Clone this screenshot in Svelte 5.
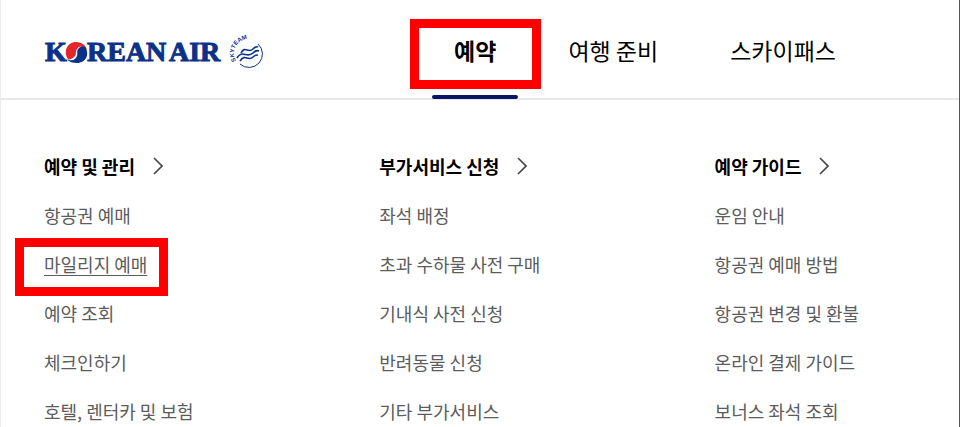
<script lang="ts">
  const menus = [
    { label: '예약', active: true },
    { label: '여행 준비', active: false },
    { label: '스카이패스', active: false }
  ];

  const groups = [
    {
      title: '예약 및 관리',
      items: ['항공권 예매', '마일리지 예매', '예약 조회', '체크인하기', '호텔, 렌터카 및 보험']
    },
    {
      title: '부가서비스 신청',
      items: ['좌석 배정', '초과 수하물 사전 구매', '기내식 사전 신청', '반려동물 신청', '기타 부가서비스']
    },
    {
      title: '예약 가이드',
      items: ['운임 안내', '항공권 예매 방법', '항공권 변경 및 환불', '온라인 결제 가이드', '보너스 좌석 조회']
    }
  ];

  const marked = '마일리지 예매';
</script>

<div class="page">
  <header class="header">
    <a class="logo" href="#home" aria-label="KOREAN AIR">
      <svg width="220" height="40" viewBox="0 0 220 40">
        <g class="wordmark">
          <text x="0" y="29">K</text>
          <text x="42" y="29">REAN</text>
          <text x="124" y="29">AIR</text>
        </g>
        <circle cx="31.5" cy="20.5" r="11.5" fill="#fff" />
        <path d="M23 27C18 20 22 10 31 10C37 10 42 14 42 19C40 14 34 13 32 17C30 20 32 22 29 25C27 27 24 28 23 27Z" fill="#e4262b" />
        <path d="M40 15C45 22 41 31 32 31C28 31 24 30 22 27C27 30 31 27 32 24C33 21 31 19 34 16C36 14 39 14 40 15Z" fill="#0b3289" />
        <g fill="none" stroke="#0b3289">
          <path d="M213 12A13 13 0 1 1 195 32" stroke-width="1" />
          <path d="M196 21C200 13 203 22 208 17C210 15 211 14 213 15" stroke-width="1.6" />
          <path d="M192 26C197 17 202 27 208 21C210 19 212 18 214 19" stroke-width="1.6" />
          <path d="M195 29C200 21 203 30 208 25C210 23 211 23 213 23" stroke-width="1.6" />
        </g>
        <path id="skyteam-arc" d="M191 29A14 14 0 0 1 216 14" fill="none" />
        <text class="skyteam"><textPath href="#skyteam-arc">SKYTEAM</textPath></text>
      </svg>
    </a>

    <nav class="nav">
      {#each menus as menu (menu.label)}
        <a class="nav-item" class:active={menu.active} href="#menu">{menu.label}</a>
      {/each}
    </nav>
  </header>

  <main class="groups">
    {#each groups as group (group.title)}
      <section class="group">
        <h2 class="group-title">
          <a href="#group">
            {group.title}
            <svg width="10" height="18" viewBox="0 0 10 18" fill="none" stroke="currentColor" stroke-width="1.6">
              <path d="M1 1L9 9L1 17" />
            </svg>
          </a>
        </h2>
        <ul>
          {#each group.items as item (item)}
            <li><a class:marked={item === marked} href="#item">{item}</a></li>
          {/each}
        </ul>
      </section>
    {/each}
  </main>
</div>

<style>
  :global(body) {
    margin: 0;
    background: #fff;
    overflow: hidden;
  }

  .page {
    min-height: 100vh;
    box-sizing: border-box;
    border-left: 1px solid #ececec;
    border-right: 1px solid #2f5f88;
    font-family: 'Noto Sans CJK KR', sans-serif;
    color: #000;
  }

  a {
    color: inherit;
    text-decoration: none;
  }

  .header {
    display: flex;
    align-items: stretch;
    height: 98px;
    border-bottom: 2px solid #e8e7ee;
  }

  .logo {
    display: flex;
    align-items: center;
    padding: 6px 0 0 44px;
  }

  .logo svg {
    overflow: visible;
  }

  .wordmark {
    font: bold 28px 'Liberation Serif', serif;
    fill: #0b3289;
    stroke: #0b3289;
  }

  .skyteam {
    font: bold 6px 'Liberation Sans', sans-serif;
    fill: #0b3289;
  }

  .nav {
    display: flex;
    gap: 28px;
    margin-left: auto;
    padding-right: 101px;
  }

  .nav-item {
    position: relative;
    display: flex;
    align-items: center;
    padding: 2px 22px 0;
    font-size: 23px;
    white-space: nowrap;
  }

  .nav-item.active {
    font-weight: 700;
  }

  .nav-item.active::before {
    content: '';
    position: absolute;
    inset: auto 0 -1px;
    height: 4px;
    border-radius: 2px;
    background: #051766;
  }

  /* Highlight frames */
  .nav-item.active::after {
    content: '';
    position: absolute;
    inset: 19px -23px 9px -22px;
    border: 9px solid #f00;
  }

  .marked::after {
    content: '';
    position: absolute;
    inset: -13px -21px -19px -29px;
    border: 9px solid #f00;
  }

  .groups {
    display: grid;
    grid-template-columns: 35fr 35fr 30fr;
    padding-top: 53px;
  }

  .group {
    padding-left: 43px;
  }

  .group-title {
    margin: 0 0 23px;
    font-size: 18px;
    line-height: 26px;
    font-weight: 700;
  }

  .group-title a {
    display: flex;
    align-items: center;
    gap: 18px;
  }

  .group-title svg {
    color: #444;
  }

  ul {
    display: grid;
    gap: 23px;
    margin: 0;
    padding: 0;
    list-style: none;
  }

  li {
    display: flex;
    font-size: 18px;
    line-height: 26px;
    color: #5c5c5c;
  }

  .marked {
    position: relative;
    text-decoration: underline;
    text-underline-offset: 3px;
  }
</style>
